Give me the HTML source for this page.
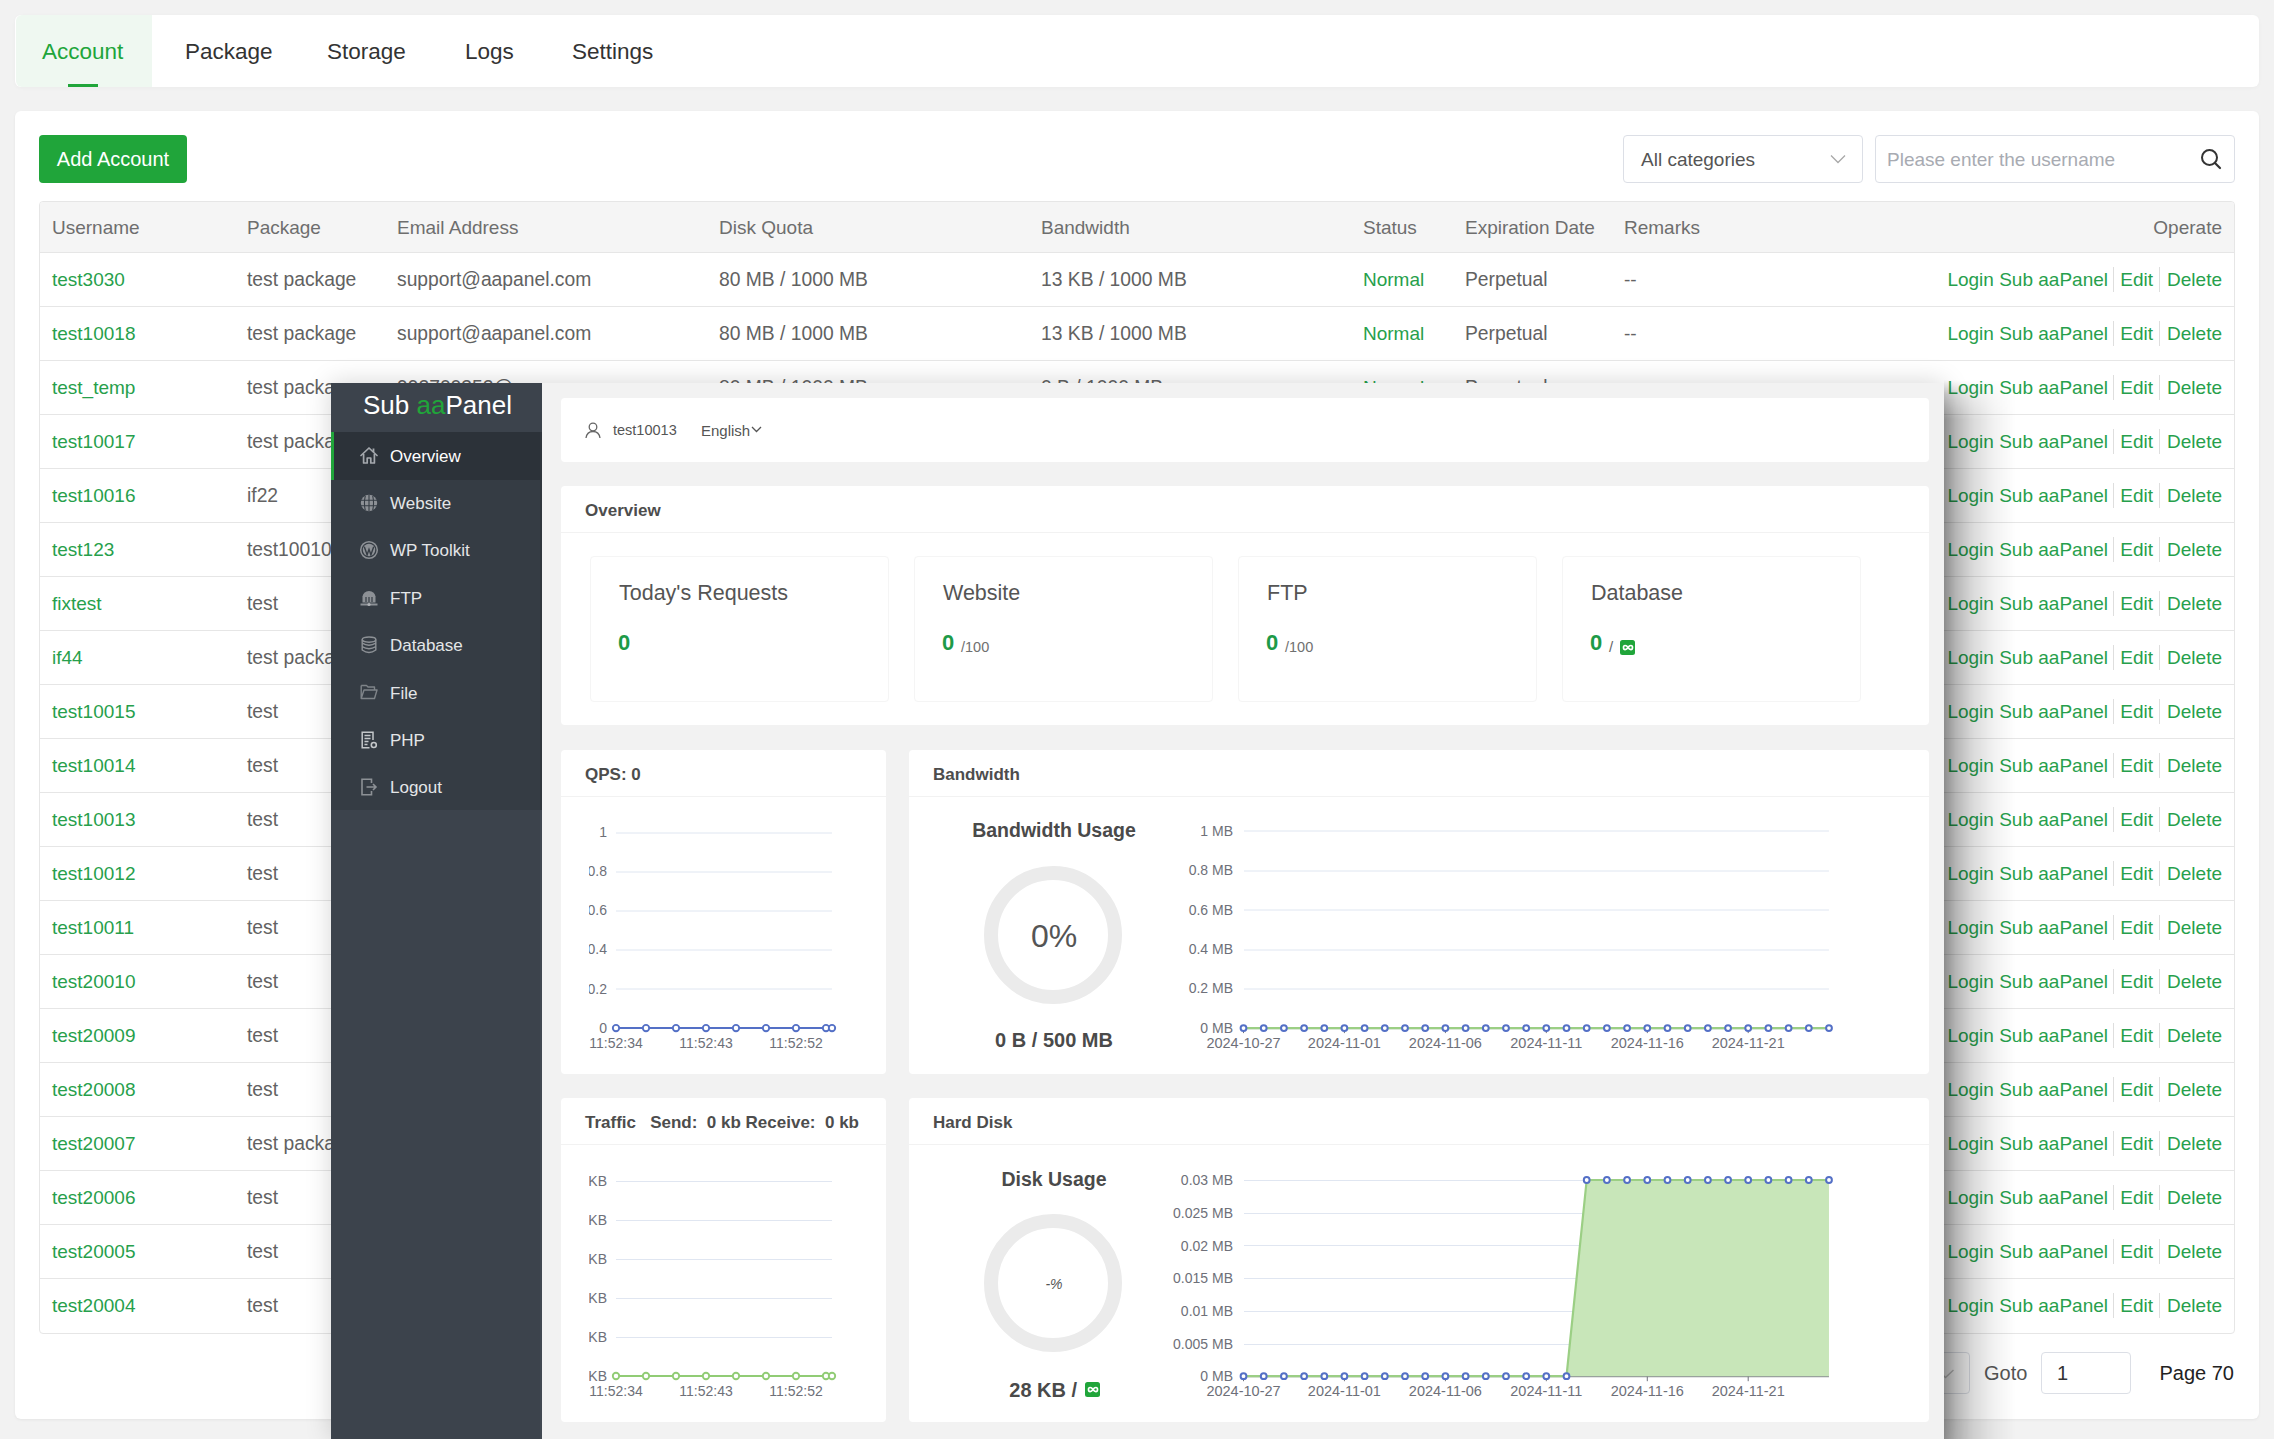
<!DOCTYPE html>
<html><head><meta charset="utf-8">
<style>
*{box-sizing:border-box;margin:0;padding:0}
html,body{width:2274px;height:1439px;overflow:hidden}
body{background:#f2f2f2;font-family:"Liberation Sans",sans-serif;position:relative;color:#555}
.abs{position:absolute}
.t{position:absolute;white-space:nowrap;line-height:1}
svg{position:absolute;overflow:visible}
</style></head><body>

<div class="abs" style="left:15px;top:15px;width:2244px;height:72px;background:#fff;border-radius:6px;box-shadow:0 1px 4px rgba(0,0,0,.03)"></div>
<div class="abs" style="left:16px;top:15px;width:136px;height:72px;background:#eff8f1;border-radius:6px 0 0 6px"></div>
<div class="abs" style="left:68px;top:84px;width:30px;height:3px;background:#20a53a"></div>
<div class="t" style="top:41.16px;font-size:22.5px;color:#20a53a;left:42px;">Account</div>
<div class="t" style="top:41.16px;font-size:22.5px;color:#333;left:185px;">Package</div>
<div class="t" style="top:41.16px;font-size:22.5px;color:#333;left:327px;">Storage</div>
<div class="t" style="top:41.16px;font-size:22.5px;color:#333;left:465px;">Logs</div>
<div class="t" style="top:41.16px;font-size:22.5px;color:#333;left:572px;">Settings</div>
<div class="abs" style="left:15px;top:111px;width:2244px;height:1308px;background:#fff;border-radius:6px;box-shadow:0 1px 3px rgba(0,0,0,.06)"></div>
<div class="abs" style="left:39px;top:135px;width:148px;height:48px;background:#20a53a;border-radius:4px"></div>
<div class="t" style="top:149.36px;font-size:20px;color:#fff;left:113px;transform:translateX(-50%);">Add Account</div>
<div class="abs" style="left:1623px;top:135px;width:240px;height:48px;border:1px solid #dcdfe6;border-radius:4px;background:#fff"></div>
<div class="t" style="top:149.84px;font-size:19px;color:#555;left:1641px;">All categories</div>
<svg style="left:1830px;top:154px" width="16" height="10" viewBox="0 0 16 10"><path d="M1 1.5 L8 8.5 L15 1.5" fill="none" stroke="#a8a8a8" stroke-width="1.3"/></svg>
<div class="abs" style="left:1875px;top:135px;width:360px;height:48px;border:1px solid #dcdfe6;border-radius:4px;background:#fff"></div>
<div class="t" style="top:149.84px;font-size:19px;color:#a8abb2;left:1887px;">Please enter the username</div>
<svg style="left:2200px;top:148px" width="22" height="22" viewBox="0 0 22 22"><circle cx="9.5" cy="9.5" r="7.5" fill="none" stroke="#333" stroke-width="2"/><path d="M15 15 L20 20" stroke="#333" stroke-width="2.2" stroke-linecap="round"/></svg>
<div class="abs" style="left:39px;top:201px;width:2196px;height:1133px;border:1px solid #e6e6e6;border-radius:4px;background:#fff"></div>
<div class="abs" style="left:40px;top:202px;width:2194px;height:50px;background:#f5f5f5;border-radius:3px 3px 0 0"></div>
<div class="abs" style="left:40px;top:252px;width:2194px;height:1px;background:#e6e6e6"></div>
<div class="t" style="top:217.84px;font-size:19px;color:#6e6e6e;left:52px;">Username</div>
<div class="t" style="top:217.84px;font-size:19px;color:#6e6e6e;left:247px;">Package</div>
<div class="t" style="top:217.84px;font-size:19px;color:#6e6e6e;left:397px;">Email Address</div>
<div class="t" style="top:217.84px;font-size:19px;color:#6e6e6e;left:719px;">Disk Quota</div>
<div class="t" style="top:217.84px;font-size:19px;color:#6e6e6e;left:1041px;">Bandwidth</div>
<div class="t" style="top:217.84px;font-size:19px;color:#6e6e6e;left:1363px;">Status</div>
<div class="t" style="top:217.84px;font-size:19px;color:#6e6e6e;left:1465px;">Expiration Date</div>
<div class="t" style="top:217.84px;font-size:19px;color:#6e6e6e;left:1624px;">Remarks</div>
<div class="t" style="top:217.84px;font-size:19px;color:#6e6e6e;right:52px;">Operate</div>
<div class="abs" style="left:40px;top:306px;width:2194px;height:1px;background:#e6e6e6"></div>
<div class="t" style="top:269.84px;font-size:19px;color:#279f4c;left:52px;">test3030</div>
<div class="t" style="top:269.70px;font-size:19.3px;color:#626262;left:247px;">test package</div>
<div class="t" style="top:269.70px;font-size:19.3px;color:#626262;left:397px;">support@aapanel.com</div>
<div class="t" style="top:269.70px;font-size:19.3px;color:#626262;left:719px;">80 MB / 1000 MB</div>
<div class="t" style="top:269.70px;font-size:19.3px;color:#626262;left:1041px;">13 KB / 1000 MB</div>
<div class="t" style="top:269.84px;font-size:19px;color:#279f4c;left:1363px;">Normal</div>
<div class="t" style="top:269.70px;font-size:19.3px;color:#626262;left:1465px;">Perpetual</div>
<div class="t" style="top:269.84px;font-size:19px;color:#626262;left:1624px;">--</div>
<div class="t" style="top:269.84px;font-size:19px;color:#279f4c;right:52px;">Delete</div>
<div class="t" style="top:269.84px;font-size:19px;color:#279f4c;right:121px;">Edit</div>
<div class="t" style="top:269.84px;font-size:19px;color:#279f4c;right:166px;">Login Sub aaPanel</div>
<div class="abs" style="left:2159px;top:267px;width:1px;height:25px;background:#dedede"></div>
<div class="abs" style="left:2113px;top:267px;width:1px;height:25px;background:#dedede"></div>
<div class="abs" style="left:40px;top:360px;width:2194px;height:1px;background:#e6e6e6"></div>
<div class="t" style="top:323.84px;font-size:19px;color:#279f4c;left:52px;">test10018</div>
<div class="t" style="top:323.70px;font-size:19.3px;color:#626262;left:247px;">test package</div>
<div class="t" style="top:323.70px;font-size:19.3px;color:#626262;left:397px;">support@aapanel.com</div>
<div class="t" style="top:323.70px;font-size:19.3px;color:#626262;left:719px;">80 MB / 1000 MB</div>
<div class="t" style="top:323.70px;font-size:19.3px;color:#626262;left:1041px;">13 KB / 1000 MB</div>
<div class="t" style="top:323.84px;font-size:19px;color:#279f4c;left:1363px;">Normal</div>
<div class="t" style="top:323.70px;font-size:19.3px;color:#626262;left:1465px;">Perpetual</div>
<div class="t" style="top:323.84px;font-size:19px;color:#626262;left:1624px;">--</div>
<div class="t" style="top:323.84px;font-size:19px;color:#279f4c;right:52px;">Delete</div>
<div class="t" style="top:323.84px;font-size:19px;color:#279f4c;right:121px;">Edit</div>
<div class="t" style="top:323.84px;font-size:19px;color:#279f4c;right:166px;">Login Sub aaPanel</div>
<div class="abs" style="left:2159px;top:321px;width:1px;height:25px;background:#dedede"></div>
<div class="abs" style="left:2113px;top:321px;width:1px;height:25px;background:#dedede"></div>
<div class="abs" style="left:40px;top:414px;width:2194px;height:1px;background:#e6e6e6"></div>
<div class="t" style="top:377.84px;font-size:19px;color:#279f4c;left:52px;">test_temp</div>
<div class="t" style="top:377.70px;font-size:19.3px;color:#626262;left:247px;">test package</div>
<div class="t" style="top:377.70px;font-size:19.3px;color:#626262;left:397px;">992700352@qq.com</div>
<div class="t" style="top:377.70px;font-size:19.3px;color:#626262;left:719px;">80 MB / 1000 MB</div>
<div class="t" style="top:377.70px;font-size:19.3px;color:#626262;left:1041px;">0 B / 1000 MB</div>
<div class="t" style="top:377.84px;font-size:19px;color:#279f4c;left:1363px;">Normal</div>
<div class="t" style="top:377.70px;font-size:19.3px;color:#626262;left:1465px;">Perpetual</div>
<div class="t" style="top:377.84px;font-size:19px;color:#626262;left:1624px;">--</div>
<div class="t" style="top:377.84px;font-size:19px;color:#279f4c;right:52px;">Delete</div>
<div class="t" style="top:377.84px;font-size:19px;color:#279f4c;right:121px;">Edit</div>
<div class="t" style="top:377.84px;font-size:19px;color:#279f4c;right:166px;">Login Sub aaPanel</div>
<div class="abs" style="left:2159px;top:375px;width:1px;height:25px;background:#dedede"></div>
<div class="abs" style="left:2113px;top:375px;width:1px;height:25px;background:#dedede"></div>
<div class="abs" style="left:40px;top:468px;width:2194px;height:1px;background:#e6e6e6"></div>
<div class="t" style="top:431.84px;font-size:19px;color:#279f4c;left:52px;">test10017</div>
<div class="t" style="top:431.70px;font-size:19.3px;color:#626262;left:247px;">test package</div>
<div class="t" style="top:431.84px;font-size:19px;color:#279f4c;right:52px;">Delete</div>
<div class="t" style="top:431.84px;font-size:19px;color:#279f4c;right:121px;">Edit</div>
<div class="t" style="top:431.84px;font-size:19px;color:#279f4c;right:166px;">Login Sub aaPanel</div>
<div class="abs" style="left:2159px;top:429px;width:1px;height:25px;background:#dedede"></div>
<div class="abs" style="left:2113px;top:429px;width:1px;height:25px;background:#dedede"></div>
<div class="abs" style="left:40px;top:522px;width:2194px;height:1px;background:#e6e6e6"></div>
<div class="t" style="top:485.84px;font-size:19px;color:#279f4c;left:52px;">test10016</div>
<div class="t" style="top:485.70px;font-size:19.3px;color:#626262;left:247px;">if22</div>
<div class="t" style="top:485.84px;font-size:19px;color:#279f4c;right:52px;">Delete</div>
<div class="t" style="top:485.84px;font-size:19px;color:#279f4c;right:121px;">Edit</div>
<div class="t" style="top:485.84px;font-size:19px;color:#279f4c;right:166px;">Login Sub aaPanel</div>
<div class="abs" style="left:2159px;top:483px;width:1px;height:25px;background:#dedede"></div>
<div class="abs" style="left:2113px;top:483px;width:1px;height:25px;background:#dedede"></div>
<div class="abs" style="left:40px;top:576px;width:2194px;height:1px;background:#e6e6e6"></div>
<div class="t" style="top:539.84px;font-size:19px;color:#279f4c;left:52px;">test123</div>
<div class="t" style="top:539.70px;font-size:19.3px;color:#626262;left:247px;">test10010</div>
<div class="t" style="top:539.84px;font-size:19px;color:#279f4c;right:52px;">Delete</div>
<div class="t" style="top:539.84px;font-size:19px;color:#279f4c;right:121px;">Edit</div>
<div class="t" style="top:539.84px;font-size:19px;color:#279f4c;right:166px;">Login Sub aaPanel</div>
<div class="abs" style="left:2159px;top:537px;width:1px;height:25px;background:#dedede"></div>
<div class="abs" style="left:2113px;top:537px;width:1px;height:25px;background:#dedede"></div>
<div class="abs" style="left:40px;top:630px;width:2194px;height:1px;background:#e6e6e6"></div>
<div class="t" style="top:593.84px;font-size:19px;color:#279f4c;left:52px;">fixtest</div>
<div class="t" style="top:593.70px;font-size:19.3px;color:#626262;left:247px;">test</div>
<div class="t" style="top:593.84px;font-size:19px;color:#279f4c;right:52px;">Delete</div>
<div class="t" style="top:593.84px;font-size:19px;color:#279f4c;right:121px;">Edit</div>
<div class="t" style="top:593.84px;font-size:19px;color:#279f4c;right:166px;">Login Sub aaPanel</div>
<div class="abs" style="left:2159px;top:591px;width:1px;height:25px;background:#dedede"></div>
<div class="abs" style="left:2113px;top:591px;width:1px;height:25px;background:#dedede"></div>
<div class="abs" style="left:40px;top:684px;width:2194px;height:1px;background:#e6e6e6"></div>
<div class="t" style="top:647.84px;font-size:19px;color:#279f4c;left:52px;">if44</div>
<div class="t" style="top:647.70px;font-size:19.3px;color:#626262;left:247px;">test package</div>
<div class="t" style="top:647.84px;font-size:19px;color:#279f4c;right:52px;">Delete</div>
<div class="t" style="top:647.84px;font-size:19px;color:#279f4c;right:121px;">Edit</div>
<div class="t" style="top:647.84px;font-size:19px;color:#279f4c;right:166px;">Login Sub aaPanel</div>
<div class="abs" style="left:2159px;top:645px;width:1px;height:25px;background:#dedede"></div>
<div class="abs" style="left:2113px;top:645px;width:1px;height:25px;background:#dedede"></div>
<div class="abs" style="left:40px;top:738px;width:2194px;height:1px;background:#e6e6e6"></div>
<div class="t" style="top:701.84px;font-size:19px;color:#279f4c;left:52px;">test10015</div>
<div class="t" style="top:701.70px;font-size:19.3px;color:#626262;left:247px;">test</div>
<div class="t" style="top:701.84px;font-size:19px;color:#279f4c;right:52px;">Delete</div>
<div class="t" style="top:701.84px;font-size:19px;color:#279f4c;right:121px;">Edit</div>
<div class="t" style="top:701.84px;font-size:19px;color:#279f4c;right:166px;">Login Sub aaPanel</div>
<div class="abs" style="left:2159px;top:699px;width:1px;height:25px;background:#dedede"></div>
<div class="abs" style="left:2113px;top:699px;width:1px;height:25px;background:#dedede"></div>
<div class="abs" style="left:40px;top:792px;width:2194px;height:1px;background:#e6e6e6"></div>
<div class="t" style="top:755.84px;font-size:19px;color:#279f4c;left:52px;">test10014</div>
<div class="t" style="top:755.70px;font-size:19.3px;color:#626262;left:247px;">test</div>
<div class="t" style="top:755.84px;font-size:19px;color:#279f4c;right:52px;">Delete</div>
<div class="t" style="top:755.84px;font-size:19px;color:#279f4c;right:121px;">Edit</div>
<div class="t" style="top:755.84px;font-size:19px;color:#279f4c;right:166px;">Login Sub aaPanel</div>
<div class="abs" style="left:2159px;top:753px;width:1px;height:25px;background:#dedede"></div>
<div class="abs" style="left:2113px;top:753px;width:1px;height:25px;background:#dedede"></div>
<div class="abs" style="left:40px;top:846px;width:2194px;height:1px;background:#e6e6e6"></div>
<div class="t" style="top:809.84px;font-size:19px;color:#279f4c;left:52px;">test10013</div>
<div class="t" style="top:809.70px;font-size:19.3px;color:#626262;left:247px;">test</div>
<div class="t" style="top:809.84px;font-size:19px;color:#279f4c;right:52px;">Delete</div>
<div class="t" style="top:809.84px;font-size:19px;color:#279f4c;right:121px;">Edit</div>
<div class="t" style="top:809.84px;font-size:19px;color:#279f4c;right:166px;">Login Sub aaPanel</div>
<div class="abs" style="left:2159px;top:807px;width:1px;height:25px;background:#dedede"></div>
<div class="abs" style="left:2113px;top:807px;width:1px;height:25px;background:#dedede"></div>
<div class="abs" style="left:40px;top:900px;width:2194px;height:1px;background:#e6e6e6"></div>
<div class="t" style="top:863.84px;font-size:19px;color:#279f4c;left:52px;">test10012</div>
<div class="t" style="top:863.70px;font-size:19.3px;color:#626262;left:247px;">test</div>
<div class="t" style="top:863.84px;font-size:19px;color:#279f4c;right:52px;">Delete</div>
<div class="t" style="top:863.84px;font-size:19px;color:#279f4c;right:121px;">Edit</div>
<div class="t" style="top:863.84px;font-size:19px;color:#279f4c;right:166px;">Login Sub aaPanel</div>
<div class="abs" style="left:2159px;top:861px;width:1px;height:25px;background:#dedede"></div>
<div class="abs" style="left:2113px;top:861px;width:1px;height:25px;background:#dedede"></div>
<div class="abs" style="left:40px;top:954px;width:2194px;height:1px;background:#e6e6e6"></div>
<div class="t" style="top:917.84px;font-size:19px;color:#279f4c;left:52px;">test10011</div>
<div class="t" style="top:917.70px;font-size:19.3px;color:#626262;left:247px;">test</div>
<div class="t" style="top:917.84px;font-size:19px;color:#279f4c;right:52px;">Delete</div>
<div class="t" style="top:917.84px;font-size:19px;color:#279f4c;right:121px;">Edit</div>
<div class="t" style="top:917.84px;font-size:19px;color:#279f4c;right:166px;">Login Sub aaPanel</div>
<div class="abs" style="left:2159px;top:915px;width:1px;height:25px;background:#dedede"></div>
<div class="abs" style="left:2113px;top:915px;width:1px;height:25px;background:#dedede"></div>
<div class="abs" style="left:40px;top:1008px;width:2194px;height:1px;background:#e6e6e6"></div>
<div class="t" style="top:971.84px;font-size:19px;color:#279f4c;left:52px;">test20010</div>
<div class="t" style="top:971.70px;font-size:19.3px;color:#626262;left:247px;">test</div>
<div class="t" style="top:971.84px;font-size:19px;color:#279f4c;right:52px;">Delete</div>
<div class="t" style="top:971.84px;font-size:19px;color:#279f4c;right:121px;">Edit</div>
<div class="t" style="top:971.84px;font-size:19px;color:#279f4c;right:166px;">Login Sub aaPanel</div>
<div class="abs" style="left:2159px;top:969px;width:1px;height:25px;background:#dedede"></div>
<div class="abs" style="left:2113px;top:969px;width:1px;height:25px;background:#dedede"></div>
<div class="abs" style="left:40px;top:1062px;width:2194px;height:1px;background:#e6e6e6"></div>
<div class="t" style="top:1025.84px;font-size:19px;color:#279f4c;left:52px;">test20009</div>
<div class="t" style="top:1025.70px;font-size:19.3px;color:#626262;left:247px;">test</div>
<div class="t" style="top:1025.84px;font-size:19px;color:#279f4c;right:52px;">Delete</div>
<div class="t" style="top:1025.84px;font-size:19px;color:#279f4c;right:121px;">Edit</div>
<div class="t" style="top:1025.84px;font-size:19px;color:#279f4c;right:166px;">Login Sub aaPanel</div>
<div class="abs" style="left:2159px;top:1023px;width:1px;height:25px;background:#dedede"></div>
<div class="abs" style="left:2113px;top:1023px;width:1px;height:25px;background:#dedede"></div>
<div class="abs" style="left:40px;top:1116px;width:2194px;height:1px;background:#e6e6e6"></div>
<div class="t" style="top:1079.84px;font-size:19px;color:#279f4c;left:52px;">test20008</div>
<div class="t" style="top:1079.70px;font-size:19.3px;color:#626262;left:247px;">test</div>
<div class="t" style="top:1079.84px;font-size:19px;color:#279f4c;right:52px;">Delete</div>
<div class="t" style="top:1079.84px;font-size:19px;color:#279f4c;right:121px;">Edit</div>
<div class="t" style="top:1079.84px;font-size:19px;color:#279f4c;right:166px;">Login Sub aaPanel</div>
<div class="abs" style="left:2159px;top:1077px;width:1px;height:25px;background:#dedede"></div>
<div class="abs" style="left:2113px;top:1077px;width:1px;height:25px;background:#dedede"></div>
<div class="abs" style="left:40px;top:1170px;width:2194px;height:1px;background:#e6e6e6"></div>
<div class="t" style="top:1133.84px;font-size:19px;color:#279f4c;left:52px;">test20007</div>
<div class="t" style="top:1133.70px;font-size:19.3px;color:#626262;left:247px;">test package</div>
<div class="t" style="top:1133.84px;font-size:19px;color:#279f4c;right:52px;">Delete</div>
<div class="t" style="top:1133.84px;font-size:19px;color:#279f4c;right:121px;">Edit</div>
<div class="t" style="top:1133.84px;font-size:19px;color:#279f4c;right:166px;">Login Sub aaPanel</div>
<div class="abs" style="left:2159px;top:1131px;width:1px;height:25px;background:#dedede"></div>
<div class="abs" style="left:2113px;top:1131px;width:1px;height:25px;background:#dedede"></div>
<div class="abs" style="left:40px;top:1224px;width:2194px;height:1px;background:#e6e6e6"></div>
<div class="t" style="top:1187.84px;font-size:19px;color:#279f4c;left:52px;">test20006</div>
<div class="t" style="top:1187.70px;font-size:19.3px;color:#626262;left:247px;">test</div>
<div class="t" style="top:1187.84px;font-size:19px;color:#279f4c;right:52px;">Delete</div>
<div class="t" style="top:1187.84px;font-size:19px;color:#279f4c;right:121px;">Edit</div>
<div class="t" style="top:1187.84px;font-size:19px;color:#279f4c;right:166px;">Login Sub aaPanel</div>
<div class="abs" style="left:2159px;top:1185px;width:1px;height:25px;background:#dedede"></div>
<div class="abs" style="left:2113px;top:1185px;width:1px;height:25px;background:#dedede"></div>
<div class="abs" style="left:40px;top:1278px;width:2194px;height:1px;background:#e6e6e6"></div>
<div class="t" style="top:1241.84px;font-size:19px;color:#279f4c;left:52px;">test20005</div>
<div class="t" style="top:1241.70px;font-size:19.3px;color:#626262;left:247px;">test</div>
<div class="t" style="top:1241.84px;font-size:19px;color:#279f4c;right:52px;">Delete</div>
<div class="t" style="top:1241.84px;font-size:19px;color:#279f4c;right:121px;">Edit</div>
<div class="t" style="top:1241.84px;font-size:19px;color:#279f4c;right:166px;">Login Sub aaPanel</div>
<div class="abs" style="left:2159px;top:1239px;width:1px;height:25px;background:#dedede"></div>
<div class="abs" style="left:2113px;top:1239px;width:1px;height:25px;background:#dedede"></div>
<div class="t" style="top:1295.84px;font-size:19px;color:#279f4c;left:52px;">test20004</div>
<div class="t" style="top:1295.70px;font-size:19.3px;color:#626262;left:247px;">test</div>
<div class="t" style="top:1295.84px;font-size:19px;color:#279f4c;right:52px;">Delete</div>
<div class="t" style="top:1295.84px;font-size:19px;color:#279f4c;right:121px;">Edit</div>
<div class="t" style="top:1295.84px;font-size:19px;color:#279f4c;right:166px;">Login Sub aaPanel</div>
<div class="abs" style="left:2159px;top:1293px;width:1px;height:25px;background:#dedede"></div>
<div class="abs" style="left:2113px;top:1293px;width:1px;height:25px;background:#dedede"></div>
<div class="abs" style="left:1900px;top:1352px;width:70px;height:42px;border:1px solid #dcdfe6;border-radius:4px;background:#fff"></div>
<div class="t" style="top:1363.36px;font-size:20px;color:#555;left:1984px;">Goto</div>
<svg style="left:1937px;top:1369px" width="17" height="10" viewBox="0 0 17 10"><path d="M0.5 1 L8.5 8.5 L16.5 1" fill="none" stroke="#c4c4c4" stroke-width="1.4"/></svg>
<div class="abs" style="left:2041px;top:1352px;width:90px;height:42px;border:1px solid #dcdfe6;border-radius:4px;background:#fff"></div>
<div class="t" style="top:1363.36px;font-size:20px;color:#333;left:2057px;">1</div>
<div class="t" style="top:1363.36px;font-size:20px;color:#222;right:40px;">Page 70</div>
<div class="abs" style="left:331px;top:383px;width:1613px;height:1056px;box-shadow:0 0 24px rgba(0,0,0,.17)"></div>
<div class="abs" style="left:1944px;top:380px;width:72px;height:1059px;background:linear-gradient(to right,rgba(0,0,0,.40),rgba(0,0,0,.27) 12px,rgba(0,0,0,.14) 30px,rgba(0,0,0,.05) 50px,rgba(0,0,0,0) 72px);-webkit-mask-image:linear-gradient(to bottom,transparent,rgba(0,0,0,.5) 14px,#000 40px)"></div>
<div class="abs" style="left:331px;top:383px;width:211px;height:1056px;background:#3c434c"></div>
<div class="abs" style="left:331px;top:432px;width:211px;height:378px;background:#353c44"></div>
<div class="abs" style="left:331px;top:432px;width:211px;height:48px;background:#2c3239"></div>
<div class="abs" style="left:331px;top:432px;width:3px;height:48px;background:#20a53a"></div>
<div class="abs" style="left:540px;top:432px;width:2px;height:378px;background:#30363d"></div>
<div class="abs" style="left:540px;top:810px;width:2px;height:629px;background:#424952"></div>
<div class="t" style="left:363px;top:392.47px;font-size:26px;color:#fff">Sub <span style="color:#20a53a">aa</span>Panel</div>
<div class="t" style="top:447.51px;font-size:17px;color:#fff;left:390px;">Overview</div>
<svg style="left:359.5px;top:446.4px" width="18" height="18" viewBox="0 0 18 18"><path d="M1 9.5 L9 2 L17 9.5" fill="none" stroke="#a4a8ad" stroke-width="1.7" stroke-linejoin="round" stroke-linecap="round"/><path d="M3.6 8 V17 H7.2 V12 H10.8 V17 H14.4 V8" fill="none" stroke="#a4a8ad" stroke-width="1.7" stroke-linejoin="round"/><path d="M13.5 2.5 V6" stroke="#a4a8ad" stroke-width="1.8"/></svg>
<div class="t" style="top:494.91px;font-size:17px;color:#e4e6e8;left:390px;">Website</div>
<svg style="left:359.5px;top:493.8px" width="18" height="18" viewBox="0 0 18 18"><circle cx="9" cy="9" r="8.2" fill="#8d9196"/><path d="M1 6.3 H17 M1 11.7 H17 M9 1 V17 M5.3 1.8 Q3.6 9 5.3 16.2 M12.7 1.8 Q14.4 9 12.7 16.2" fill="none" stroke="#353c44" stroke-width="1.1"/></svg>
<div class="t" style="top:542.31px;font-size:17px;color:#e4e6e8;left:390px;">WP Toolkit</div>
<svg style="left:359.5px;top:541.2px" width="18" height="18" viewBox="0 0 18 18"><circle cx="9" cy="9" r="8.3" fill="none" stroke="#8d9196" stroke-width="1.5"/><circle cx="9" cy="9" r="6.2" fill="#8d9196"/><path d="M4.3 5.8 L7.1 13.8 L9 8.3 L10.9 13.8 L13.7 5.8" fill="none" stroke="#353c44" stroke-width="1.4"/></svg>
<div class="t" style="top:589.71px;font-size:17px;color:#e4e6e8;left:390px;">FTP</div>
<svg style="left:359.5px;top:588.6px" width="18" height="18" viewBox="0 0 18 18"><path d="M2.5 8 A6.5 6 0 0 1 15.5 8 Z" fill="#8d9196"/><rect x="2.5" y="7.5" width="13" height="6" fill="#8d9196"/><path d="M6 8 V13 M9 8 V13 M12 8 V13" stroke="#353c44" stroke-width="1.2"/><path d="M0.5 15.5 H17.5" stroke="#8d9196" stroke-width="2"/><circle cx="9" cy="15.5" r="1.6" fill="#b0b3b7"/></svg>
<div class="t" style="top:637.11px;font-size:17px;color:#e4e6e8;left:390px;">Database</div>
<svg style="left:359.5px;top:636.0px" width="18" height="18" viewBox="0 0 18 18"><ellipse cx="9" cy="3.6" rx="6.8" ry="2.6" fill="none" stroke="#8d9196" stroke-width="1.4"/><path d="M2.2 3.6 V14 Q9 19 15.8 14 V3.6 M2.2 7.2 Q9 11.2 15.8 7.2 M2.2 10.7 Q9 14.7 15.8 10.7" fill="none" stroke="#8d9196" stroke-width="1.4"/></svg>
<div class="t" style="top:684.51px;font-size:17px;color:#e4e6e8;left:390px;">File</div>
<svg style="left:359.5px;top:683.4px" width="18" height="18" viewBox="0 0 18 18"><path d="M1.2 2.5 H6.5 L8 4 H14.5 V6.5 M1.2 2.5 V15.5 H14.5 L17 7 H4 L1.2 15.5" fill="none" stroke="#7f8489" stroke-width="1.4" stroke-linejoin="round"/></svg>
<div class="t" style="top:731.91px;font-size:17px;color:#e4e6e8;left:390px;">PHP</div>
<svg style="left:359.5px;top:730.8px" width="18" height="18" viewBox="0 0 18 18"><path d="M13 9 V1.2 H2.2 V16.8 H9.5" fill="none" stroke="#c4c7ca" stroke-width="1.5"/><path d="M4.5 4.5 H10.5 M4.5 7.5 H10.5 M4.5 10.5 H8.5 M4.5 13.5 H7.5" stroke="#c4c7ca" stroke-width="1.4"/><circle cx="13.8" cy="14" r="2.5" fill="none" stroke="#c4c7ca" stroke-width="1.6"/></svg>
<div class="t" style="top:779.31px;font-size:17px;color:#e4e6e8;left:390px;">Logout</div>
<svg style="left:359.5px;top:778.2px" width="18" height="18" viewBox="0 0 18 18"><path d="M11.5 5 V1.2 H2 V16.8 H11.5 V13" fill="none" stroke="#8d9196" stroke-width="1.6"/><path d="M6.5 9 H16 M13 6 L16 9 L13 12" fill="none" stroke="#8d9196" stroke-width="1.6"/></svg>
<div class="abs" style="left:542px;top:383px;width:1402px;height:1056px;background:#f2f2f2"></div>
<div class="abs" style="left:561px;top:398px;width:1368px;height:64px;background:#fff;border-radius:4px"></div>
<svg style="left:585px;top:422px" width="16" height="16" viewBox="0 0 16 16"><circle cx="8" cy="5" r="3.8" fill="none" stroke="#666" stroke-width="1.3"/><path d="M1 16 Q2 9.5 8 9.5 Q14 9.5 15 16" fill="none" stroke="#666" stroke-width="1.3"/></svg>
<div class="t" style="top:423.01px;font-size:14.5px;color:#555;left:613px;">test10013</div>
<div class="t" style="top:422.77px;font-size:15px;color:#555;left:701px;">English</div>
<svg style="left:751px;top:426px" width="11" height="7" viewBox="0 0 11 7"><path d="M1 1 L5.5 5.5 L10 1" fill="none" stroke="#555" stroke-width="1.3"/></svg>
<div class="abs" style="left:561px;top:486px;width:1368px;height:239px;background:#fff;border-radius:4px"></div>
<div class="t" style="top:502.11px;font-size:17px;color:#4d4d4d;font-weight:700;left:585px;">Overview</div>
<div class="abs" style="left:561px;top:532px;width:1368px;height:1px;background:#f2f2f2"></div>
<div class="abs" style="left:590px;top:556px;width:299px;height:146px;border:1px solid #f5f5f5;border-radius:4px"></div>
<div class="t" style="top:582.64px;font-size:21.5px;color:#555;left:619px;">Today's Requests</div>
<div class="t" style="top:631.70px;font-size:22px;color:#1d9a48;font-weight:700;left:618px;">0</div>
<div class="abs" style="left:914px;top:556px;width:299px;height:146px;border:1px solid #f5f5f5;border-radius:4px"></div>
<div class="t" style="top:582.64px;font-size:21.5px;color:#555;left:943px;">Website</div>
<div class="t" style="top:631.70px;font-size:22px;color:#1d9a48;font-weight:700;left:942px;">0</div>
<div class="t" style="top:639.51px;font-size:14.5px;color:#707070;left:961px;">/100</div>
<div class="abs" style="left:1238px;top:556px;width:299px;height:146px;border:1px solid #f5f5f5;border-radius:4px"></div>
<div class="t" style="top:582.64px;font-size:21.5px;color:#555;left:1267px;">FTP</div>
<div class="t" style="top:631.70px;font-size:22px;color:#1d9a48;font-weight:700;left:1266px;">0</div>
<div class="t" style="top:639.51px;font-size:14.5px;color:#707070;left:1285px;">/100</div>
<div class="abs" style="left:1562px;top:556px;width:299px;height:146px;border:1px solid #f5f5f5;border-radius:4px"></div>
<div class="t" style="top:582.64px;font-size:21.5px;color:#555;left:1591px;">Database</div>
<div class="t" style="top:631.70px;font-size:22px;color:#1d9a48;font-weight:700;left:1590px;">0</div>
<div class="t" style="top:639.27px;font-size:15px;color:#666;left:1609px;">/</div>
<div class="abs" style="left:1620px;top:640px;width:15px;height:15px;background:#20a53a;border-radius:2.5px"><svg style="left:1.5px;top:4px" width="12" height="7" viewBox="0 0 12 7"><path d="M6 3.5 C4.3 0.8 1.5 0.8 1.5 3.5 C1.5 6.2 4.3 6.2 6 3.5 C7.7 0.8 10.5 0.8 10.5 3.5 C10.5 6.2 7.7 6.2 6 3.5 Z" fill="none" stroke="#fff" stroke-width="1.7"/></svg></div>
<div class="abs" style="left:561px;top:750px;width:325px;height:324px;background:#fff;border-radius:4px"></div>
<div class="t" style="top:765.51px;font-size:17px;color:#4d4d4d;font-weight:700;left:585px;">QPS: 0</div>
<div class="abs" style="left:561px;top:796px;width:325px;height:1px;background:#f2f2f2"></div>
<div class="abs" style="left:909px;top:750px;width:1020px;height:324px;background:#fff;border-radius:4px"></div>
<div class="t" style="top:765.51px;font-size:17px;color:#4d4d4d;font-weight:700;left:933px;">Bandwidth</div>
<div class="abs" style="left:909px;top:796px;width:1020px;height:1px;background:#f2f2f2"></div>
<div class="abs" style="left:561px;top:1098px;width:325px;height:324px;background:#fff;border-radius:4px"></div>
<div class="t" style="top:1113.51px;font-size:17px;color:#4d4d4d;font-weight:700;left:585px;">Traffic&nbsp;&nbsp;&nbsp;Send:&nbsp;&nbsp;0 kb Receive:&nbsp;&nbsp;0 kb</div>
<div class="abs" style="left:561px;top:1144px;width:325px;height:1px;background:#f2f2f2"></div>
<div class="abs" style="left:909px;top:1098px;width:1020px;height:324px;background:#fff;border-radius:4px"></div>
<div class="t" style="top:1113.51px;font-size:17px;color:#4d4d4d;font-weight:700;left:933px;">Hard Disk</div>
<div class="abs" style="left:909px;top:1144px;width:1020px;height:1px;background:#f2f2f2"></div>
<div class="abs" style="left:589px;top:816.5px;width:280px;height:236.0999999999999px;overflow:hidden"><div class="abs" style="left:-589px;top:-816.5px;width:1000px;height:2000px"><div class="t" style="right:393px;top:824.75px;font-size:14px;color:#6e7079">1</div><div class="t" style="right:393px;top:863.97px;font-size:14px;color:#6e7079">0.8</div><div class="t" style="right:393px;top:903.19px;font-size:14px;color:#6e7079">0.6</div><div class="t" style="right:393px;top:942.41px;font-size:14px;color:#6e7079">0.4</div><div class="t" style="right:393px;top:981.63px;font-size:14px;color:#6e7079">0.2</div><div class="t" style="right:393px;top:1020.85px;font-size:14px;color:#6e7079">0</div></div></div>
<svg style="left:600px;top:821.5px" width="260" height="226.0999999999999" viewBox="600 821.5 260 226.0999999999999"><line x1="616" x2="832" y1="832.5" y2="832.5" stroke="#e0e6f1" stroke-width="1"/><line x1="616" x2="832" y1="871.5" y2="871.5" stroke="#e0e6f1" stroke-width="1"/><line x1="616" x2="832" y1="910.5" y2="910.5" stroke="#e0e6f1" stroke-width="1"/><line x1="616" x2="832" y1="949.5" y2="949.5" stroke="#e0e6f1" stroke-width="1"/><line x1="616" x2="832" y1="988.5" y2="988.5" stroke="#e0e6f1" stroke-width="1"/><polyline points="616,1027.6 646,1027.6 676,1027.6 706,1027.6 736,1027.6 766,1027.6 796,1027.6 826,1027.6 832,1027.6" fill="none" stroke="#5470c6" stroke-width="2"/><circle cx="616" cy="1027.6" r="3.2" fill="#fff" stroke="#5470c6" stroke-width="1.9"/><circle cx="646" cy="1027.6" r="3.2" fill="#fff" stroke="#5470c6" stroke-width="1.9"/><circle cx="676" cy="1027.6" r="3.2" fill="#fff" stroke="#5470c6" stroke-width="1.9"/><circle cx="706" cy="1027.6" r="3.2" fill="#fff" stroke="#5470c6" stroke-width="1.9"/><circle cx="736" cy="1027.6" r="3.2" fill="#fff" stroke="#5470c6" stroke-width="1.9"/><circle cx="766" cy="1027.6" r="3.2" fill="#fff" stroke="#5470c6" stroke-width="1.9"/><circle cx="796" cy="1027.6" r="3.2" fill="#fff" stroke="#5470c6" stroke-width="1.9"/><circle cx="826" cy="1027.6" r="3.2" fill="#fff" stroke="#5470c6" stroke-width="1.9"/><circle cx="832" cy="1027.6" r="3.2" fill="#fff" stroke="#5470c6" stroke-width="1.9"/></svg>
<div class="t" style="top:1035.85px;font-size:14px;color:#6e7079;left:616px;transform:translateX(-50%);">11:52:34</div>
<div class="t" style="top:1035.85px;font-size:14px;color:#6e7079;left:706px;transform:translateX(-50%);">11:52:43</div>
<div class="t" style="top:1035.85px;font-size:14px;color:#6e7079;left:796px;transform:translateX(-50%);">11:52:52</div>
<div class="abs" style="left:589px;top:1166px;width:280px;height:235px;overflow:hidden"><div class="abs" style="left:-589px;top:-1166px;width:1000px;height:2000px"><div class="t" style="right:393px;top:1174.25px;font-size:14px;color:#6e7079">KB</div><div class="t" style="right:393px;top:1213.25px;font-size:14px;color:#6e7079">KB</div><div class="t" style="right:393px;top:1252.25px;font-size:14px;color:#6e7079">KB</div><div class="t" style="right:393px;top:1291.25px;font-size:14px;color:#6e7079">KB</div><div class="t" style="right:393px;top:1330.25px;font-size:14px;color:#6e7079">KB</div><div class="t" style="right:393px;top:1369.25px;font-size:14px;color:#6e7079">KB</div></div></div>
<svg style="left:600px;top:1171px" width="260" height="225" viewBox="600 1171 260 225"><line x1="616" x2="832" y1="1181.5" y2="1181.5" stroke="#e0e6f1" stroke-width="1"/><line x1="616" x2="832" y1="1220.5" y2="1220.5" stroke="#e0e6f1" stroke-width="1"/><line x1="616" x2="832" y1="1259.5" y2="1259.5" stroke="#e0e6f1" stroke-width="1"/><line x1="616" x2="832" y1="1298.5" y2="1298.5" stroke="#e0e6f1" stroke-width="1"/><line x1="616" x2="832" y1="1337.5" y2="1337.5" stroke="#e0e6f1" stroke-width="1"/><polyline points="616,1376 646,1376 676,1376 706,1376 736,1376 766,1376 796,1376 826,1376 832,1376" fill="none" stroke="#91cc75" stroke-width="2"/><circle cx="616" cy="1376" r="3.2" fill="#fff" stroke="#91cc75" stroke-width="1.9"/><circle cx="646" cy="1376" r="3.2" fill="#fff" stroke="#91cc75" stroke-width="1.9"/><circle cx="676" cy="1376" r="3.2" fill="#fff" stroke="#91cc75" stroke-width="1.9"/><circle cx="706" cy="1376" r="3.2" fill="#fff" stroke="#91cc75" stroke-width="1.9"/><circle cx="736" cy="1376" r="3.2" fill="#fff" stroke="#91cc75" stroke-width="1.9"/><circle cx="766" cy="1376" r="3.2" fill="#fff" stroke="#91cc75" stroke-width="1.9"/><circle cx="796" cy="1376" r="3.2" fill="#fff" stroke="#91cc75" stroke-width="1.9"/><circle cx="826" cy="1376" r="3.2" fill="#fff" stroke="#91cc75" stroke-width="1.9"/><circle cx="832" cy="1376" r="3.2" fill="#fff" stroke="#91cc75" stroke-width="1.9"/></svg>
<div class="t" style="top:1384.25px;font-size:14px;color:#6e7079;left:616px;transform:translateX(-50%);">11:52:34</div>
<div class="t" style="top:1384.25px;font-size:14px;color:#6e7079;left:706px;transform:translateX(-50%);">11:52:43</div>
<div class="t" style="top:1384.25px;font-size:14px;color:#6e7079;left:796px;transform:translateX(-50%);">11:52:52</div>
<div class="t" style="top:821.40px;font-size:19.5px;color:#4a4a4a;font-weight:700;left:1054px;transform:translateX(-50%);">Bandwidth Usage</div>
<svg style="left:984px;top:866.3px" width="138" height="138" viewBox="0 0 138 138"><circle cx="69" cy="69" r="62" fill="none" stroke="#ebebeb" stroke-width="14"/></svg>
<div class="t" style="left:1054px;top:920.38px;transform:translateX(-50%);font-size:32px;color:#555">0%</div>
<div class="t" style="left:1054px;top:1029.84px;transform:translateX(-50%);font-size:20px;color:#4a4a4a;font-weight:700">0 B / 500 MB</div>
<div class="t" style="top:1169.50px;font-size:19.5px;color:#4a4a4a;font-weight:700;left:1054px;transform:translateX(-50%);">Disk Usage</div>
<svg style="left:984px;top:1214.4px" width="138" height="138" viewBox="0 0 138 138"><circle cx="69" cy="69" r="62" fill="none" stroke="#ebebeb" stroke-width="14"/></svg>
<div class="t" style="left:1054px;top:1276.65px;transform:translateX(-50%);font-size:14px;color:#555;font-style:italic">-%</div>
<div class="t" style="left:1054px;top:1380.44px;transform:translateX(-50%);font-size:20px;color:#4a4a4a;font-weight:700">28 KB / <span style="display:inline-block;width:16px;height:16px;vertical-align:-1px"></span></div>
<div class="t" style="top:823.75px;font-size:14px;color:#6e7079;right:1041px;">1 MB</div>
<div class="t" style="top:863.17px;font-size:14px;color:#6e7079;right:1041px;">0.8 MB</div>
<div class="t" style="top:902.59px;font-size:14px;color:#6e7079;right:1041px;">0.6 MB</div>
<div class="t" style="top:942.01px;font-size:14px;color:#6e7079;right:1041px;">0.4 MB</div>
<div class="t" style="top:981.43px;font-size:14px;color:#6e7079;right:1041px;">0.2 MB</div>
<div class="t" style="top:1020.85px;font-size:14px;color:#6e7079;right:1041px;">0 MB</div>
<svg style="left:1235px;top:820.5px" width="610" height="227.0999999999999" viewBox="1235 820.5 610 227.0999999999999"><line x1="1244" x2="1829" y1="830.5" y2="830.5" stroke="#e0e6f1" stroke-width="1"/><line x1="1244" x2="1829" y1="870.5" y2="870.5" stroke="#e0e6f1" stroke-width="1"/><line x1="1244" x2="1829" y1="909.5" y2="909.5" stroke="#e0e6f1" stroke-width="1"/><line x1="1244" x2="1829" y1="949.5" y2="949.5" stroke="#e0e6f1" stroke-width="1"/><line x1="1244" x2="1829" y1="988.5" y2="988.5" stroke="#e0e6f1" stroke-width="1"/><line x1="1244" x2="1829" y1="1028.1" y2="1028.1" stroke="#6e7079" stroke-width="1"/><line x1="1243.5" x2="1243.5" y1="1027.6" y2="1032.6" stroke="#6e7079" stroke-width="1"/><line x1="1344.4" x2="1344.4" y1="1027.6" y2="1032.6" stroke="#6e7079" stroke-width="1"/><line x1="1445.4" x2="1445.4" y1="1027.6" y2="1032.6" stroke="#6e7079" stroke-width="1"/><line x1="1546.3" x2="1546.3" y1="1027.6" y2="1032.6" stroke="#6e7079" stroke-width="1"/><line x1="1647.3" x2="1647.3" y1="1027.6" y2="1032.6" stroke="#6e7079" stroke-width="1"/><line x1="1748.2" x2="1748.2" y1="1027.6" y2="1032.6" stroke="#6e7079" stroke-width="1"/><polyline points="1243.5,1027.6 1263.7,1027.6 1283.9,1027.6 1304.1,1027.6 1324.3,1027.6 1344.4,1027.6 1364.6,1027.6 1384.8,1027.6 1405.0,1027.6 1425.2,1027.6 1445.4,1027.6 1465.6,1027.6 1485.8,1027.6 1506.0,1027.6 1526.2,1027.6 1546.3,1027.6 1566.5,1027.6 1586.7,1027.6 1606.9,1027.6 1627.1,1027.6 1647.3,1027.6 1667.5,1027.6 1687.7,1027.6 1707.9,1027.6 1728.1,1027.6 1748.2,1027.6 1768.4,1027.6 1788.6,1027.6 1808.8,1027.6 1829.0,1027.6" fill="none" stroke="#9bcf84" stroke-width="2.2"/><circle cx="1243.5" cy="1027.6" r="2.9" fill="#fff" stroke="#5470c6" stroke-width="2"/><circle cx="1263.7" cy="1027.6" r="2.9" fill="#fff" stroke="#5470c6" stroke-width="2"/><circle cx="1283.9" cy="1027.6" r="2.9" fill="#fff" stroke="#5470c6" stroke-width="2"/><circle cx="1304.1" cy="1027.6" r="2.9" fill="#fff" stroke="#5470c6" stroke-width="2"/><circle cx="1324.3" cy="1027.6" r="2.9" fill="#fff" stroke="#5470c6" stroke-width="2"/><circle cx="1344.4" cy="1027.6" r="2.9" fill="#fff" stroke="#5470c6" stroke-width="2"/><circle cx="1364.6" cy="1027.6" r="2.9" fill="#fff" stroke="#5470c6" stroke-width="2"/><circle cx="1384.8" cy="1027.6" r="2.9" fill="#fff" stroke="#5470c6" stroke-width="2"/><circle cx="1405.0" cy="1027.6" r="2.9" fill="#fff" stroke="#5470c6" stroke-width="2"/><circle cx="1425.2" cy="1027.6" r="2.9" fill="#fff" stroke="#5470c6" stroke-width="2"/><circle cx="1445.4" cy="1027.6" r="2.9" fill="#fff" stroke="#5470c6" stroke-width="2"/><circle cx="1465.6" cy="1027.6" r="2.9" fill="#fff" stroke="#5470c6" stroke-width="2"/><circle cx="1485.8" cy="1027.6" r="2.9" fill="#fff" stroke="#5470c6" stroke-width="2"/><circle cx="1506.0" cy="1027.6" r="2.9" fill="#fff" stroke="#5470c6" stroke-width="2"/><circle cx="1526.2" cy="1027.6" r="2.9" fill="#fff" stroke="#5470c6" stroke-width="2"/><circle cx="1546.3" cy="1027.6" r="2.9" fill="#fff" stroke="#5470c6" stroke-width="2"/><circle cx="1566.5" cy="1027.6" r="2.9" fill="#fff" stroke="#5470c6" stroke-width="2"/><circle cx="1586.7" cy="1027.6" r="2.9" fill="#fff" stroke="#5470c6" stroke-width="2"/><circle cx="1606.9" cy="1027.6" r="2.9" fill="#fff" stroke="#5470c6" stroke-width="2"/><circle cx="1627.1" cy="1027.6" r="2.9" fill="#fff" stroke="#5470c6" stroke-width="2"/><circle cx="1647.3" cy="1027.6" r="2.9" fill="#fff" stroke="#5470c6" stroke-width="2"/><circle cx="1667.5" cy="1027.6" r="2.9" fill="#fff" stroke="#5470c6" stroke-width="2"/><circle cx="1687.7" cy="1027.6" r="2.9" fill="#fff" stroke="#5470c6" stroke-width="2"/><circle cx="1707.9" cy="1027.6" r="2.9" fill="#fff" stroke="#5470c6" stroke-width="2"/><circle cx="1728.1" cy="1027.6" r="2.9" fill="#fff" stroke="#5470c6" stroke-width="2"/><circle cx="1748.2" cy="1027.6" r="2.9" fill="#fff" stroke="#5470c6" stroke-width="2"/><circle cx="1768.4" cy="1027.6" r="2.9" fill="#fff" stroke="#5470c6" stroke-width="2"/><circle cx="1788.6" cy="1027.6" r="2.9" fill="#fff" stroke="#5470c6" stroke-width="2"/><circle cx="1808.8" cy="1027.6" r="2.9" fill="#fff" stroke="#5470c6" stroke-width="2"/><circle cx="1829.0" cy="1027.6" r="2.9" fill="#fff" stroke="#5470c6" stroke-width="2"/></svg>
<div class="t" style="top:1035.61px;font-size:14.5px;color:#6e7079;left:1243.5px;transform:translateX(-50%);">2024-10-27</div>
<div class="t" style="top:1035.61px;font-size:14.5px;color:#6e7079;left:1344.4px;transform:translateX(-50%);">2024-11-01</div>
<div class="t" style="top:1035.61px;font-size:14.5px;color:#6e7079;left:1445.4px;transform:translateX(-50%);">2024-11-06</div>
<div class="t" style="top:1035.61px;font-size:14.5px;color:#6e7079;left:1546.3px;transform:translateX(-50%);">2024-11-11</div>
<div class="t" style="top:1035.61px;font-size:14.5px;color:#6e7079;left:1647.3px;transform:translateX(-50%);">2024-11-16</div>
<div class="t" style="top:1035.61px;font-size:14.5px;color:#6e7079;left:1748.2px;transform:translateX(-50%);">2024-11-21</div>
<div class="t" style="top:1173.25px;font-size:14px;color:#6e7079;right:1041px;">0.03 MB</div>
<div class="t" style="top:1205.95px;font-size:14px;color:#6e7079;right:1041px;">0.025 MB</div>
<div class="t" style="top:1238.65px;font-size:14px;color:#6e7079;right:1041px;">0.02 MB</div>
<div class="t" style="top:1271.35px;font-size:14px;color:#6e7079;right:1041px;">0.015 MB</div>
<div class="t" style="top:1304.05px;font-size:14px;color:#6e7079;right:1041px;">0.01 MB</div>
<div class="t" style="top:1336.75px;font-size:14px;color:#6e7079;right:1041px;">0.005 MB</div>
<div class="t" style="top:1369.45px;font-size:14px;color:#6e7079;right:1041px;">0 MB</div>
<svg style="left:1235px;top:1170px" width="610" height="226.20000000000005" viewBox="1235 1170 610 226.20000000000005"><line x1="1244" x2="1829" y1="1180.5" y2="1180.5" stroke="#e0e6f1" stroke-width="1"/><line x1="1244" x2="1829" y1="1213.5" y2="1213.5" stroke="#e0e6f1" stroke-width="1"/><line x1="1244" x2="1829" y1="1245.5" y2="1245.5" stroke="#e0e6f1" stroke-width="1"/><line x1="1244" x2="1829" y1="1278.5" y2="1278.5" stroke="#e0e6f1" stroke-width="1"/><line x1="1244" x2="1829" y1="1311.5" y2="1311.5" stroke="#e0e6f1" stroke-width="1"/><line x1="1244" x2="1829" y1="1344.5" y2="1344.5" stroke="#e0e6f1" stroke-width="1"/><line x1="1244" x2="1829" y1="1376.7" y2="1376.7" stroke="#6e7079" stroke-width="1"/><line x1="1243.5" x2="1243.5" y1="1376.2" y2="1381.2" stroke="#6e7079" stroke-width="1"/><line x1="1344.4" x2="1344.4" y1="1376.2" y2="1381.2" stroke="#6e7079" stroke-width="1"/><line x1="1445.4" x2="1445.4" y1="1376.2" y2="1381.2" stroke="#6e7079" stroke-width="1"/><line x1="1546.3" x2="1546.3" y1="1376.2" y2="1381.2" stroke="#6e7079" stroke-width="1"/><line x1="1647.3" x2="1647.3" y1="1376.2" y2="1381.2" stroke="#6e7079" stroke-width="1"/><line x1="1748.2" x2="1748.2" y1="1376.2" y2="1381.2" stroke="#6e7079" stroke-width="1"/><polygon points="1566.5,1376.2 1586.7,1180.0 1606.9,1180.0 1627.1,1180.0 1647.3,1180.0 1667.5,1180.0 1687.7,1180.0 1707.9,1180.0 1728.1,1180.0 1748.2,1180.0 1768.4,1180.0 1788.6,1180.0 1808.8,1180.0 1829.0,1180.0 1829.0,1376.2" fill="#c8e6b9"/><polyline points="1243.5,1376.2 1263.7,1376.2 1283.9,1376.2 1304.1,1376.2 1324.3,1376.2 1344.4,1376.2 1364.6,1376.2 1384.8,1376.2 1405.0,1376.2 1425.2,1376.2 1445.4,1376.2 1465.6,1376.2 1485.8,1376.2 1506.0,1376.2 1526.2,1376.2 1546.3,1376.2 1566.5,1376.2 1586.7,1180.0 1606.9,1180.0 1627.1,1180.0 1647.3,1180.0 1667.5,1180.0 1687.7,1180.0 1707.9,1180.0 1728.1,1180.0 1748.2,1180.0 1768.4,1180.0 1788.6,1180.0 1808.8,1180.0 1829.0,1180.0" fill="none" stroke="#9bcf84" stroke-width="2.2"/><circle cx="1243.5" cy="1376.2" r="2.9" fill="#fff" stroke="#5470c6" stroke-width="2"/><circle cx="1263.7" cy="1376.2" r="2.9" fill="#fff" stroke="#5470c6" stroke-width="2"/><circle cx="1283.9" cy="1376.2" r="2.9" fill="#fff" stroke="#5470c6" stroke-width="2"/><circle cx="1304.1" cy="1376.2" r="2.9" fill="#fff" stroke="#5470c6" stroke-width="2"/><circle cx="1324.3" cy="1376.2" r="2.9" fill="#fff" stroke="#5470c6" stroke-width="2"/><circle cx="1344.4" cy="1376.2" r="2.9" fill="#fff" stroke="#5470c6" stroke-width="2"/><circle cx="1364.6" cy="1376.2" r="2.9" fill="#fff" stroke="#5470c6" stroke-width="2"/><circle cx="1384.8" cy="1376.2" r="2.9" fill="#fff" stroke="#5470c6" stroke-width="2"/><circle cx="1405.0" cy="1376.2" r="2.9" fill="#fff" stroke="#5470c6" stroke-width="2"/><circle cx="1425.2" cy="1376.2" r="2.9" fill="#fff" stroke="#5470c6" stroke-width="2"/><circle cx="1445.4" cy="1376.2" r="2.9" fill="#fff" stroke="#5470c6" stroke-width="2"/><circle cx="1465.6" cy="1376.2" r="2.9" fill="#fff" stroke="#5470c6" stroke-width="2"/><circle cx="1485.8" cy="1376.2" r="2.9" fill="#fff" stroke="#5470c6" stroke-width="2"/><circle cx="1506.0" cy="1376.2" r="2.9" fill="#fff" stroke="#5470c6" stroke-width="2"/><circle cx="1526.2" cy="1376.2" r="2.9" fill="#fff" stroke="#5470c6" stroke-width="2"/><circle cx="1546.3" cy="1376.2" r="2.9" fill="#fff" stroke="#5470c6" stroke-width="2"/><circle cx="1566.5" cy="1376.2" r="2.9" fill="#fff" stroke="#5470c6" stroke-width="2"/><circle cx="1586.7" cy="1180.0" r="2.9" fill="#fff" stroke="#5470c6" stroke-width="2"/><circle cx="1606.9" cy="1180.0" r="2.9" fill="#fff" stroke="#5470c6" stroke-width="2"/><circle cx="1627.1" cy="1180.0" r="2.9" fill="#fff" stroke="#5470c6" stroke-width="2"/><circle cx="1647.3" cy="1180.0" r="2.9" fill="#fff" stroke="#5470c6" stroke-width="2"/><circle cx="1667.5" cy="1180.0" r="2.9" fill="#fff" stroke="#5470c6" stroke-width="2"/><circle cx="1687.7" cy="1180.0" r="2.9" fill="#fff" stroke="#5470c6" stroke-width="2"/><circle cx="1707.9" cy="1180.0" r="2.9" fill="#fff" stroke="#5470c6" stroke-width="2"/><circle cx="1728.1" cy="1180.0" r="2.9" fill="#fff" stroke="#5470c6" stroke-width="2"/><circle cx="1748.2" cy="1180.0" r="2.9" fill="#fff" stroke="#5470c6" stroke-width="2"/><circle cx="1768.4" cy="1180.0" r="2.9" fill="#fff" stroke="#5470c6" stroke-width="2"/><circle cx="1788.6" cy="1180.0" r="2.9" fill="#fff" stroke="#5470c6" stroke-width="2"/><circle cx="1808.8" cy="1180.0" r="2.9" fill="#fff" stroke="#5470c6" stroke-width="2"/><circle cx="1829.0" cy="1180.0" r="2.9" fill="#fff" stroke="#5470c6" stroke-width="2"/></svg>
<div class="t" style="top:1384.21px;font-size:14.5px;color:#6e7079;left:1243.5px;transform:translateX(-50%);">2024-10-27</div>
<div class="t" style="top:1384.21px;font-size:14.5px;color:#6e7079;left:1344.4px;transform:translateX(-50%);">2024-11-01</div>
<div class="t" style="top:1384.21px;font-size:14.5px;color:#6e7079;left:1445.4px;transform:translateX(-50%);">2024-11-06</div>
<div class="t" style="top:1384.21px;font-size:14.5px;color:#6e7079;left:1546.3px;transform:translateX(-50%);">2024-11-11</div>
<div class="t" style="top:1384.21px;font-size:14.5px;color:#6e7079;left:1647.3px;transform:translateX(-50%);">2024-11-16</div>
<div class="t" style="top:1384.21px;font-size:14.5px;color:#6e7079;left:1748.2px;transform:translateX(-50%);">2024-11-21</div>
<div class="abs" style="left:1085px;top:1382px;width:15px;height:15px;background:#20a53a;border-radius:2.5px"><svg style="left:1.5px;top:4px" width="12" height="7" viewBox="0 0 12 7"><path d="M6 3.5 C4.3 0.8 1.5 0.8 1.5 3.5 C1.5 6.2 4.3 6.2 6 3.5 C7.7 0.8 10.5 0.8 10.5 3.5 C10.5 6.2 7.7 6.2 6 3.5 Z" fill="none" stroke="#fff" stroke-width="1.7"/></svg></div>
</body></html>
